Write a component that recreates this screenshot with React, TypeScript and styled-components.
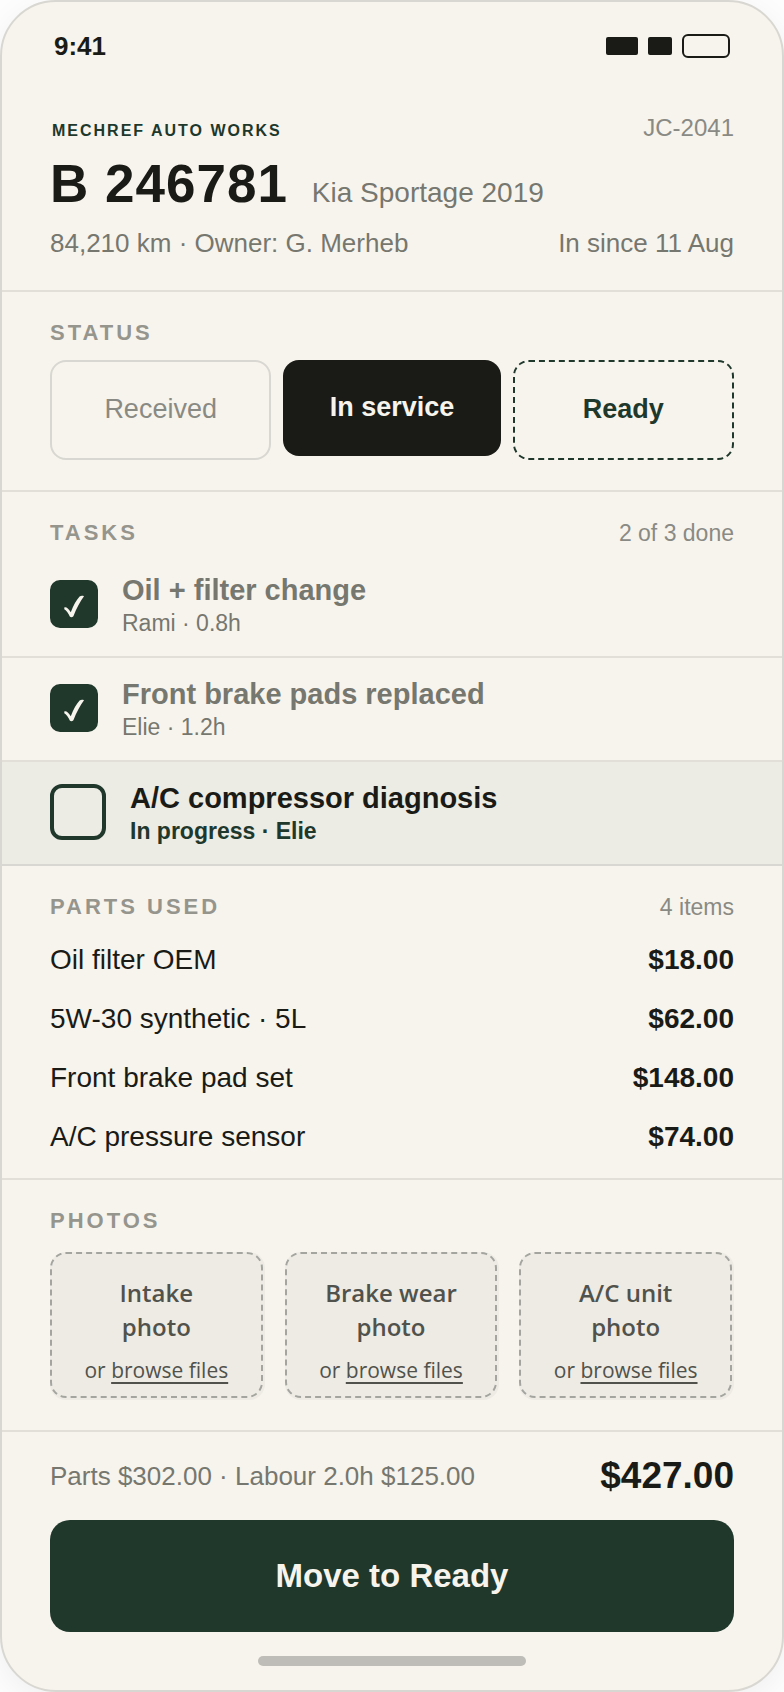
import React from 'react';
import styled, { createGlobalStyle, css } from 'styled-components';

const ink = '#1a1b16';
const green = '#20382c';
const paper = '#f7f4ed';
const line = '#e2dfd8';
const edge = '#d9d7d1';
const grey = '#76776f';
const soft = '#8a8a84';

const GlobalStyle = createGlobalStyle`
  *, *::before, *::after { box-sizing: border-box; }
  body {
    margin: 0;
    background: #fdfdfd;
    color: ${ink};
    font-family: "Liberation Sans", Arial, sans-serif;
  }
  button { font-family: inherit; cursor: pointer; }
`;

const Phone = styled.main`
  background: ${paper};
  border: 2px solid ${edge};
  border-radius: 56px;
  overflow: hidden;
  box-shadow: 0 8px 32px rgba(0, 0, 0, 0.06);
`;

const StatusBar = styled.div`
  display: flex;
  align-items: center;
  justify-content: space-between;
  padding: 30px 52px 0;
  font-size: 26px;
  font-weight: 700;
  line-height: 28px;
`;

const Indicators = styled.div`
  display: flex;
  align-items: center;
  gap: 10px;
`;

const Signal = styled.span<{ $width: number }>`
  width: ${(p) => p.$width}px;
  height: 18px;
  border-radius: 2px;
  background: ${ink};
`;

const Battery = styled.span`
  width: 48px;
  height: 24px;
  border: 2px solid ${ink};
  border-radius: 6px;
`;

const Header = styled.header`
  display: flex;
  flex-direction: column;
  padding: 54px 48px 32px;
  border-bottom: 2px solid ${line};
`;

const HeaderRow = styled.div`
  display: flex;
  align-items: baseline;
  justify-content: space-between;
`;

const Shop = styled.span`
  color: ${green};
  font-size: 16px;
  font-weight: 700;
  letter-spacing: 2px;
  padding-left: 2px;
`;

const JobCode = styled.span`
  color: ${soft};
  font-size: 24px;
  line-height: 28px;
`;

const Vehicle = styled.div`
  display: flex;
  align-items: baseline;
  gap: 24px;
  margin: 14px 0 16px;
`;

const Plate = styled.h1`
  margin: 0;
  font-size: 53px;
  line-height: 56px;
  letter-spacing: 1px;
`;

const Model = styled.span`
  color: ${grey};
  font-size: 28px;
`;

const Detail = styled.span`
  color: ${grey};
  font-size: 26px;
  line-height: 30px;
`;

const Section = styled.section<{ $bottom?: number; $strong?: boolean }>`
  padding: 28px 0 ${(p) => p.$bottom ?? 0}px;
  border-bottom: 2px solid ${(p) => (p.$strong ? edge : line)};
`;

const SectionHead = styled.div<{ $gap: number }>`
  display: flex;
  align-items: center;
  justify-content: space-between;
  height: 26px;
  margin: 0 48px ${(p) => p.$gap}px;
`;

const SectionTitle = styled.h2`
  margin: 0;
  color: #95958e;
  font-size: 22px;
  line-height: 26px;
  letter-spacing: 3px;
`;

const Meta = styled.span`
  color: ${soft};
  font-size: 23px;
  line-height: 28px;
`;

const Steps = styled.div`
  display: flex;
  align-items: flex-start;
  gap: 12px;
  padding: 0 48px;
`;

type StepKind = 'past' | 'current' | 'next';

const stepLooks = {
  past: css`
    border: 2px solid ${edge};
    color: ${soft};
  `,
  current: css`
    border: 0;
    background: ${ink};
    color: ${paper};
    font-weight: 700;
  `,
  next: css`
    border: 2px dashed ${green};
    color: ${green};
    font-weight: 700;
  `,
};

const Step = styled.button<{ $kind: StepKind }>`
  box-sizing: content-box;
  flex: 1 1 0;
  height: 94px;
  padding: 0 0 2px;
  border-radius: 16px;
  background: transparent;
  font-size: 27px;
  ${(p) => stepLooks[p.$kind]}
`;

const TaskList = styled.ul`
  list-style: none;
  margin: 0;
  padding: 0;
`;

const Task = styled.li<{ $active: boolean }>`
  background: ${(p) => (p.$active ? '#ecebe4' : 'transparent')};
  & + & { border-top: 2px solid ${line}; }
`;

const TaskLabel = styled.label`
  display: flex;
  align-items: center;
  gap: 24px;
  padding: 18px 48px;
  cursor: pointer;
`;

const Tick = styled.span`
  display: grid;
  place-items: center;
  padding-bottom: 2px;
  & > * { grid-area: 1 / 1; }
  svg { pointer-events: none; }
`;

const TickBox = styled.input`
  appearance: none;
  width: 56px;
  height: 56px;
  margin: 0;
  border: 4px solid ${green};
  border-radius: 12px;
  &:checked {
    width: 48px;
    height: 48px;
    border-radius: 10px;
    background: ${green};
  }
`;

const TaskText = styled.span`
  display: flex;
  flex-direction: column;
`;

const TaskName = styled.span<{ $active: boolean }>`
  color: ${(p) => (p.$active ? ink : grey)};
  font-size: 29px;
  font-weight: 700;
  line-height: 36px;
`;

const TaskNote = styled.span<{ $active: boolean }>`
  color: ${(p) => (p.$active ? green : grey)};
  font-size: 23px;
  font-weight: ${(p) => (p.$active ? 700 : 400)};
  line-height: 30px;
`;

const PartsWrap = styled.div`
  padding: 0 48px;
`;

const Parts = styled.table`
  width: 100%;
  border-collapse: collapse;
  font-size: 28px;
  th, td { height: 59px; padding: 0; }
  th { text-align: left; font-weight: 400; }
  td { text-align: right; font-weight: 700; }
`;

const Photos = styled.div`
  display: grid;
  grid-template-columns: repeat(3, 1fr);
  gap: 20px;
  padding: 0 48px;
`;

const Slot = styled.div`
  padding: 0 2px 2px 0;
  border-radius: 16px;
  background: #edebe4;
  color: #51524c;
  font-family: "Open Sans", "Noto Sans", sans-serif;
  text-align: center;
`;

const SlotFrame = styled.div`
  display: flex;
  flex-direction: column;
  align-items: center;
  gap: 12px;
  padding: 22px 0 12px;
  border: 2px dashed #a5a5a0;
  border-radius: 16px;
`;

const SlotName = styled.span`
  max-width: 140px;
  font-size: 24px;
  font-weight: 600;
  line-height: 34px;
`;

const SlotHint = styled.span`
  font-size: 21px;
  line-height: 28px;
  white-space: nowrap;
`;

const Browse = styled.a`
  color: inherit;
  text-decoration: underline;
  text-decoration-thickness: 2px;
  text-underline-offset: 4px;
  text-decoration-skip-ink: none;
`;

const Footer = styled.footer`
  display: flex;
  flex-direction: column;
  padding: 22px 48px 24px;
`;

const TotalRow = styled.div`
  display: flex;
  align-items: center;
  justify-content: space-between;
  margin-bottom: 22px;
`;

const Total = styled.strong`
  font-size: 37px;
  line-height: 44px;
`;

const Primary = styled.button`
  height: 112px;
  border: 0;
  border-radius: 20px;
  background: ${green};
  color: ${paper};
  font-size: 33px;
  font-weight: 700;
`;

const HomeBar = styled.span`
  align-self: center;
  width: 268px;
  height: 10px;
  margin-top: 24px;
  border-radius: 5px;
  background: #bfbdb7;
`;

const CheckMark = () => (
  <svg width="48" height="48" viewBox="0 0 48 48" fill="none" aria-hidden="true">
    <path
      d="M14.3 27.6C15.8 26.4 18 28 20.8 32.2C23.4 25.6 26.4 20 29.6 16.6C30.8 15.6 32.6 15.6 34 16.2C30.4 21.2 26.6 28 23.4 36.2C22.2 37.4 20.6 37.4 19.8 36.4C18.4 33.4 16.6 30.6 14.3 29.2Z"
      fill={paper}
    />
  </svg>
);

const steps: { label: string; kind: StepKind }[] = [
  { label: 'Received', kind: 'past' },
  { label: 'In service', kind: 'current' },
  { label: 'Ready', kind: 'next' },
];

const tasks = [
  { name: 'Oil + filter change', note: 'Rami · 0.8h', done: true },
  { name: 'Front brake pads replaced', note: 'Elie · 1.2h', done: true },
  { name: 'A/C compressor diagnosis', note: 'In progress · Elie', done: false },
];

const parts = [
  ['Oil filter OEM', '$18.00'],
  ['5W-30 synthetic · 5L', '$62.00'],
  ['Front brake pad set', '$148.00'],
  ['A/C pressure sensor', '$74.00'],
];

const photos = ['Intake photo', 'Brake wear photo', 'A/C unit photo'];

export default function App() {
  const [done, setDone] = React.useState(tasks.map((t) => t.done));
  const toggle = (index: number) =>
    setDone((all) => all.map((value, i) => (i === index ? !value : value)));

  return (
    <>
      <GlobalStyle />
      <Phone>
        <StatusBar>
          <span>9:41</span>
          <Indicators>
            <Signal $width={32} />
            <Signal $width={24} />
            <Battery />
          </Indicators>
        </StatusBar>

        <Header>
          <HeaderRow>
            <Shop>MECHREF AUTO WORKS</Shop>
            <JobCode>JC-2041</JobCode>
          </HeaderRow>
          <Vehicle>
            <Plate>B 246781</Plate>
            <Model>Kia Sportage 2019</Model>
          </Vehicle>
          <HeaderRow>
            <Detail>84,210 km · Owner: G. Merheb</Detail>
            <Detail>In since 11 Aug</Detail>
          </HeaderRow>
        </Header>

        <Section $bottom={30}>
          <SectionHead $gap={14}>
            <SectionTitle>STATUS</SectionTitle>
          </SectionHead>
          <Steps>
            {steps.map((step) => (
              <Step key={step.label} type="button" $kind={step.kind}>
                {step.label}
              </Step>
            ))}
          </Steps>
        </Section>

        <Section $strong>
          <SectionHead $gap={8}>
            <SectionTitle>TASKS</SectionTitle>
            <Meta>{done.filter(Boolean).length} of 3 done</Meta>
          </SectionHead>
          <TaskList>
            {tasks.map((task, i) => (
              <Task key={task.name} $active={!done[i]}>
                <TaskLabel>
                  <Tick>
                    <TickBox type="checkbox" checked={done[i]} onChange={() => toggle(i)} />
                    {done[i] && <CheckMark />}
                  </Tick>
                  <TaskText>
                    <TaskName $active={!done[i]}>{task.name}</TaskName>
                    <TaskNote $active={!done[i]}>{task.note}</TaskNote>
                  </TaskText>
                </TaskLabel>
              </Task>
            ))}
          </TaskList>
        </Section>

        <Section $bottom={12}>
          <SectionHead $gap={10}>
            <SectionTitle>PARTS USED</SectionTitle>
            <Meta>4 items</Meta>
          </SectionHead>
          <PartsWrap>
            <Parts>
              <tbody>
                {parts.map(([name, price]) => (
                  <tr key={name}>
                    <th scope="row">{name}</th>
                    <td>{price}</td>
                  </tr>
                ))}
              </tbody>
            </Parts>
          </PartsWrap>
        </Section>

        <Section $bottom={30}>
          <SectionHead $gap={18}>
            <SectionTitle>PHOTOS</SectionTitle>
          </SectionHead>
          <Photos>
            {photos.map((name) => (
              <Slot key={name}>
                <SlotFrame>
                  <SlotName>{name}</SlotName>
                  <SlotHint>
                    or <Browse href="#browse">browse files</Browse>
                  </SlotHint>
                </SlotFrame>
              </Slot>
            ))}
          </Photos>
        </Section>

        <Footer>
          <TotalRow>
            <Detail>Parts $302.00 · Labour 2.0h $125.00</Detail>
            <Total>$427.00</Total>
          </TotalRow>
          <Primary type="button">Move to Ready</Primary>
          <HomeBar />
        </Footer>
      </Phone>
    </>
  );
}
